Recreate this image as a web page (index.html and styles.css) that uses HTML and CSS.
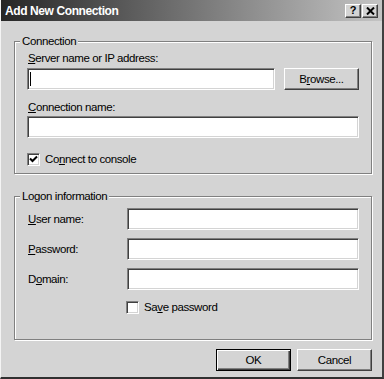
FILE: index.html
```html
<!DOCTYPE html>
<html lang="en">
<head>
    <meta charset="UTF-8">
    <title>Add New Connection</title>
    <link rel="stylesheet" href="styles.css">
</head>
<body>
    <div class="window">
        <div class="titlebar">
            <span class="title">Add New Connection</span>
            <div class="title-buttons">
                <span class="tbtn">?</span>
                <span class="tbtn">
                    <svg width="9" height="8" viewBox="0 0 9 8"><path d="M1 0.5 L8 7.5 M8 0.5 L1 7.5" stroke="#000" stroke-width="2"/></svg>
                </span>
            </div>
        </div>

        <div class="content">
            <!-- Connection -->
            <fieldset class="group">
                <legend>Connection</legend>
                <div class="group-body">
                    <label class="lbl"><u>S</u>erver name or IP address:</label>
                    <div class="row">
                        <div class="field server"><span class="caret"></span></div>
                        <button class="btn">B<u>r</u>owse...</button>
                    </div>
                    <label class="lbl second"><u>C</u>onnection name:</label>
                    <div class="field name"></div>
                    <div class="check-row">
                        <span class="checkbox">
                            <svg width="9" height="9" viewBox="0 0 9 9"><path d="M1 3.5 L3.5 6 L8 1.5" fill="none" stroke="#000" stroke-width="2"/></svg>
                        </span>
                        <span>Co<u>n</u>nect to console</span>
                    </div>
                </div>
            </fieldset>

            <!-- Logon information -->
            <fieldset class="group logon">
                <legend>Logon information</legend>
                <div class="group-body">
                    <div class="form-grid">
                        <label class="lbl"><u>U</u>ser name:</label>
                        <div class="field"></div>
                        <label class="lbl"><u>P</u>assword:</label>
                        <div class="field"></div>
                        <label class="lbl">D<u>o</u>main:</label>
                        <div class="field"></div>
                    </div>
                    <div class="check-row save">
                        <span class="checkbox"></span>
                        <span>Sa<u>v</u>e password</span>
                    </div>
                </div>
            </fieldset>

            <div class="actions">
                <button class="btn default">OK</button>
                <button class="btn">Cancel</button>
            </div>
        </div>
    </div>
</body>
</html>
```

FILE: styles.css
```css
body {
    margin: 0;
    padding: 0;
    background-color: #d4d4d4;
    font-family: "Liberation Sans", Arial, sans-serif;
    font-size: 11.5px;
    letter-spacing: -0.4px;
    color: #000;
}
.window {
    width: 384px;
    height: 379px;
    box-sizing: border-box;
    background-color: #d4d4d4;
    border-left: 1px solid #f4f4f4;
    border-right: 2px solid #404040;
    border-bottom: 2px solid #303030;
    overflow: hidden;
}

/* Title bar */
.titlebar {
    height: 21px;
    display: flex;
    align-items: center;
    justify-content: space-between;
    padding: 0 4px 0 4px;
    background: linear-gradient(to right, #262626, #c4c4c4);
}
.title {
    color: #fff;
    font-size: 12px;
    font-weight: bold;
    letter-spacing: -0.4px;
}
.title-buttons {
    display: flex;
    gap: 1px;
}
.tbtn {
    width: 16px;
    height: 14px;
    box-sizing: border-box;
    display: flex;
    align-items: center;
    justify-content: center;
    background-color: #d4d4d4;
    border: 1px solid;
    border-color: #fff #404040 #404040 #fff;
    box-shadow: inset -1px -1px #808080;
    font-weight: bold;
    font-size: 11px;
    letter-spacing: 0;
    line-height: 1;
}

.content {
    padding: 13px 10px 0 13px;
}

/* Group boxes */
.group {
    margin: 0;
    padding: 0;
    min-width: 0;
    border: 1px solid #808080;
    box-shadow: inset 1px 1px #fff, 1px 1px #fff;
}
.group legend {
    margin-left: 5px;
    padding: 0 2px;
    line-height: 14px;
    background-color: #d4d4d4;
}
.logon {
    margin-top: 15px;
}
.group-body {
    padding: 3px 12px 7px 12px;
}
.logon .group-body {
    padding: 5px 12px 25px 12px;
}

.lbl {
    display: block;
    line-height: 14px;
    padding-left: 1px;
}
.lbl.second {
    margin-top: 10px;
}

.row {
    display: flex;
    gap: 9px;
    margin-top: 3px;
}

/* Sunken edit box */
.field {
    height: 22px;
    box-sizing: border-box;
    background-color: #fff;
    border: 1px solid;
    border-color: #808080 #fff #fff #808080;
    box-shadow: inset 1px 1px #404040, inset -1px -1px #d4d4d4;
    display: flex;
    align-items: center;
    padding-left: 2px;
}
.field.server {
    width: 248px;
}
.field.name {
    margin-top: 2px;
}
.caret {
    width: 1px;
    height: 14px;
    background-color: #000;
}

/* Push buttons */
.btn {
    width: 75px;
    height: 22px;
    box-sizing: border-box;
    padding: 0;
    font-family: inherit;
    font-size: 11.5px;
    letter-spacing: -0.4px;
    color: #000;
    background-color: #d4d4d4;
    border: 1px solid;
    border-color: #fff #404040 #404040 #fff;
    box-shadow: inset -1px -1px #808080;
}
.btn.default {
    border: 1px solid #000;
    box-shadow: inset 1px 1px #fff, inset -1px -1px #404040, inset -2px -2px #808080;
}

/* Check boxes */
.check-row {
    display: flex;
    align-items: center;
    gap: 5px;
    margin-top: 14px;
    line-height: 14px;
}
.checkbox {
    width: 13px;
    height: 13px;
    box-sizing: border-box;
    background-color: #fff;
    border: 1px solid;
    border-color: #808080 #fff #fff #808080;
    box-shadow: inset 1px 1px #404040, inset -1px -1px #d4d4d4;
    display: flex;
    align-items: center;
    justify-content: center;
}
.check-row.save {
    margin-top: 10px;
    margin-left: 99px;
}

.form-grid {
    display: grid;
    grid-template-columns: 100px 1fr;
    row-gap: 8px;
    align-items: center;
}

.actions {
    display: flex;
    justify-content: flex-end;
    gap: 6px;
    margin-top: 9px;
}
```
